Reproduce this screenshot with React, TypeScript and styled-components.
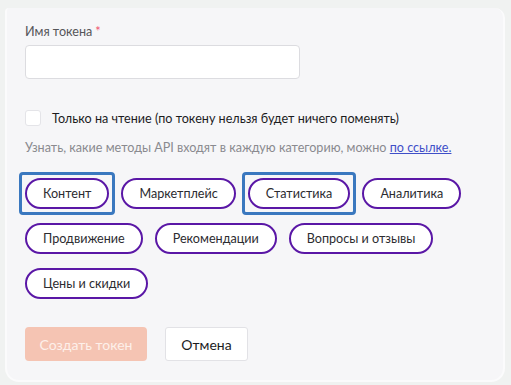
import React, { useState } from "react";
import styled, { createGlobalStyle } from "styled-components";

const GlobalStyle = createGlobalStyle`
  html, body {
    margin: 0;
    padding: 0;
    background: #f0f2f1;
    font-family: Lato, "Noto Sans", sans-serif;
  }
`;

const Page = styled.div`
  width: 511px;
  height: 385px;
  padding: 8px 6px 3px 5px;
  box-sizing: border-box;
`;

const Card = styled.div`
  height: 100%;
  box-sizing: border-box;
  background: #f6f6f8;
  border: 2px solid #fbfbfc;
  border-top: none;
  border-radius: 4px 10px 14px 14px;
  padding: 16px 18px 16px 18px;
  display: flex;
  flex-direction: column;
`;

const Label = styled.div`
  font-size: 12.6px;
  line-height: 16px;
  color: #555559;
`;

const Required = styled.span`
  color: #f0506e;
  margin-left: 3px;
`;

const TextInput = styled.input`
  margin-top: 5px;
  width: 275px;
  height: 34px;
  box-sizing: border-box;
  background: #fff;
  border: 1px solid #dcdce0;
  border-radius: 4px;
  outline: none;
  padding: 0 10px;
  font: inherit;
`;

const CheckRow = styled.label`
  margin-top: 31px;
  display: flex;
  align-items: center;
  gap: 11px;
  font-size: 12.6px;
  color: #1c1c1e;
  cursor: pointer;
`;

const CheckBox = styled.span`
  width: 16px;
  height: 16px;
  box-sizing: border-box;
  border: 1px solid #e4e4e8;
  border-radius: 3px;
  background: #fff;
`;

const Hint = styled.p`
  margin: 13px 0 0;
  font-size: 12.6px;
  line-height: 18px;
  color: #8a8a8f;
`;

const HintLink = styled.a`
  color: #3f4fc8;
  text-decoration: underline;
`;

const Chips = styled.div`
  margin-top: 21px;
  display: flex;
  flex-wrap: wrap;
  gap: 14px 12px;
`;

const Chip = styled.button<{ $focused?: boolean }>`
  position: relative;
  height: 31px;
  box-sizing: border-box;
  padding: 0 16px;
  border: 2px solid #5a17a6;
  border-radius: 16px;
  background: #fff;
  color: #2c2c30;
  font-family: inherit;
  font-size: 12.6px;
  cursor: pointer;
  outline: none;

  &::after {
    content: "";
    display: ${(p) => (p.$focused ? "block" : "none")};
    position: absolute;
    inset: -8px;
    border: 3px solid #3a78bf;
    border-radius: 4px;
    pointer-events: none;
  }
`;

const Actions = styled.div`
  margin-top: 28px;
  display: flex;
  gap: 18px;
`;

const PrimaryBtn = styled.button`
  width: 122px;
  height: 34px;
  border: none;
  border-radius: 4px;
  background: #f5c4b3;
  color: #fdf0ea;
  font-family: inherit;
  font-size: 14px;
`;

const SecondaryBtn = styled.button`
  width: 83px;
  height: 34px;
  box-sizing: border-box;
  border: 1px solid #e2e2e6;
  border-radius: 3px;
  background: #fff;
  color: #1c1c1e;
  font-family: inherit;
  font-size: 14px;
  cursor: pointer;
`;

const categories = [
  { name: "Контент", focused: true },
  { name: "Маркетплейс" },
  { name: "Статистика", focused: true },
  { name: "Аналитика" },
  { name: "Продвижение" },
  { name: "Рекомендации" },
  { name: "Вопросы и отзывы" },
  { name: "Цены и скидки" },
];

export default function App(): JSX.Element {
  const [name, setName] = useState("");

  return (
    <Page>
      <GlobalStyle />
      <Card>
        <Label>
          Имя токена<Required>*</Required>
        </Label>
        <TextInput value={name} onChange={(e) => setName(e.target.value)} />
        <CheckRow>
          <CheckBox />
          Только на чтение (по токену нельзя будет ничего поменять)
        </CheckRow>
        <Hint>
          Узнать, какие методы API входят в каждую категорию, можно{" "}
          <HintLink href="#">по ссылке.</HintLink>
        </Hint>
        <Chips>
          {categories.map((c) => (
            <Chip key={c.name} $focused={c.focused}>
              {c.name}
            </Chip>
          ))}
        </Chips>
        <Actions>
          <PrimaryBtn disabled>Создать токен</PrimaryBtn>
          <SecondaryBtn>Отмена</SecondaryBtn>
        </Actions>
      </Card>
    </Page>
  );
}
